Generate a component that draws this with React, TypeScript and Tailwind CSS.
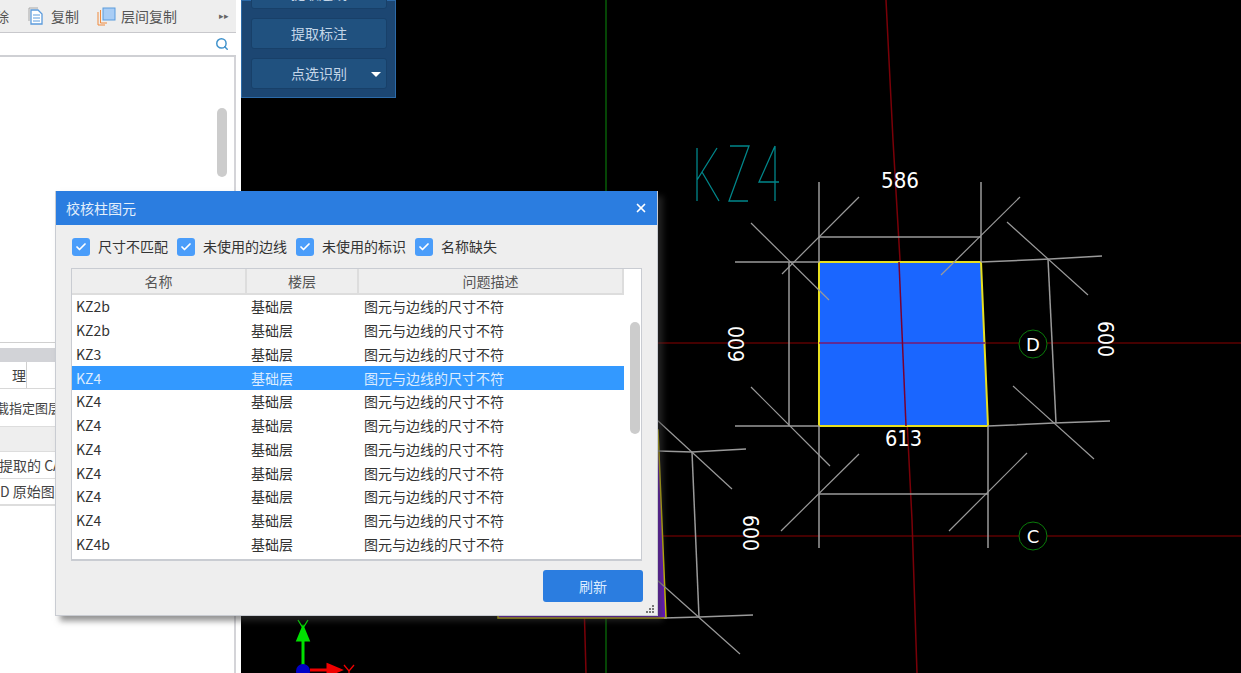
import { Search, Check, X } from 'lucide-react';

const cn = '"Noto Sans CJK SC", "Liberation Sans", sans-serif';

const rows = [
  'KZ2b', 'KZ2b', 'KZ3', 'KZ4', 'KZ4', 'KZ4', 'KZ4', 'KZ4', 'KZ4', 'KZ4', 'KZ4b',
];

const filters = ['尺寸不匹配', '未使用的边线', '未使用的标识', '名称缺失'];

function Line({ d, c = '#9a9a9a', w = 1.5 }: { d: string; c?: string; w?: number }) {
  return <path d={d} stroke={c} strokeWidth={w} fill="none" />;
}

function CadDrawing() {
  return (
    <svg className="absolute inset-0" width="1000" height="673" viewBox="241 0 1000 673">
      {/* axis lines */}
      <Line d="M606 0V673" c="#0a8a0a" w={1} />
      <Line d="M241 343H1241" c="#8a0000" w={1} />
      <Line d="M241 536H1241" c="#8a0000" w={1} />
      <Line d="M886 0L893 140L900 260L906 400L912 520L917 673" c="#7a0008" />
      <Line d="M584 600L586 673" c="#7a0008" />

      {/* purple column, mostly under the dialog */}
      <path d="M498 618H666L658 430H498Z" fill="#6a0fd0" stroke="#d4c400" strokeWidth="1.5" />

      {/* blue column */}
      <path d="M819 262H981L988 426H819Z" fill="#1a66ff" stroke="#e8e020" strokeWidth="2" />
      <Line d="M819 343H985" c="#7a1a70" />
      <Line d="M899 262L906 426" c="#7a0030" />

      {/* rebar grid */}
      <Line d="M735 262H819M981 262L1050 259L1102 256" />
      <Line d="M735 426H819M988 426L1054 423L1110 421" />
      <Line d="M819 182V262M981 182V262" />
      <Line d="M819 426V548M988 426V548" />
      <Line d="M819 237H981" />
      <Line d="M819 494H988" />
      <Line d="M789 262V426" />
      <Line d="M1048 259L1056 423" />
      <Line d="M751 223L829 300" w={1.2} />
      <Line d="M782 274L859 197" w={1.2} />
      <Line d="M941 275L1020 197" w={1.2} />
      <Line d="M1007 222L1088 295" w={1.2} />
      <Line d="M751 387L830 466" w={1.2} />
      <Line d="M781 531L859 454" w={1.2} />
      <Line d="M949 531L1027 453" w={1.2} />
      <Line d="M1013 386L1094 459" w={1.2} />

      {/* lower left column */}
      <Line d="M658 451L692 452L746 449" />
      <Line d="M692 452L699 617" />
      <Line d="M664 618L699 617L753 615" />
      <Line d="M657 420L732 489" w={1.2} />
      <Line d="M657 580L740 654" w={1.2} />

      {/* name label */}
      <g fill="none" stroke="#00868a" strokeWidth="1.3">
        <path d="M697 148V201M697 180L717 148M702 172L719 201" />
        <path d="M730 146H749L729 201H748" />
        <path d="M775 146L759 182H779M775 146V201" />
      </g>

      {/* dimensions */}
      <g fill="#ffffff" fontFamily='"DejaVu Sans", sans-serif' fontSize="21">
        <text x="881" y="188" textLength="38" lengthAdjust="spacingAndGlyphs">586</text>
        <text x="885" y="446" textLength="37" lengthAdjust="spacingAndGlyphs">613</text>
        <text transform="translate(744 362) rotate(-90)" textLength="36" lengthAdjust="spacingAndGlyphs">600</text>
        <text transform="translate(1098 321) rotate(90)" textLength="36" lengthAdjust="spacingAndGlyphs">600</text>
        <text transform="translate(743 515) rotate(90)" textLength="36" lengthAdjust="spacingAndGlyphs">600</text>
      </g>

      {/* axis bubbles */}
      <circle cx="1033" cy="344" r="14" fill="#000" stroke="#0a7a0a" strokeWidth="1" />
      <circle cx="1033" cy="536" r="14" fill="#000" stroke="#0a7a0a" strokeWidth="1" />
      <g fill="#ffffff" fontFamily='"DejaVu Sans", sans-serif' fontSize="18" textAnchor="middle">
        <text x="1033" y="351">D</text>
        <text x="1033" y="543">C</text>
      </g>

      {/* ucs marker */}
      <path d="M303 666V640M298 640L303 628L308 640Z" stroke="#00e000" strokeWidth="3" fill="#00e000" />
      <path d="M310 670H330M328 665L340 670L328 675Z" stroke="#f00000" strokeWidth="3" fill="#f00000" />
      <circle cx="303" cy="671" r="7" fill="#0000c8" />
      <path d="M298 620L303 628L308 620M303 628V635" stroke="#00e000" strokeWidth="1.3" fill="none" />
      <path d="M344 665L349 671L354 665M349 671V673" stroke="#f00000" strokeWidth="1.3" fill="none" />
    </svg>
  );
}

function DocIcon() {
  return (
    <svg width="17" height="18" viewBox="0 0 17 18" fill="none">
      <path d="M1 14V1H10" stroke="#a8a8a8" strokeWidth="1" />
      <path d="M3 3H10L14 7V17H3Z" fill="#fff" stroke="#5b9bdc" strokeWidth="1.3" />
      <path d="M5 8H12M5 11H12M5 14H12" stroke="#5b9bdc" strokeWidth="1" />
    </svg>
  );
}

function FloorCopyIcon() {
  return (
    <svg width="19" height="19" viewBox="0 0 19 19" fill="none">
      <path d="M1 18V5M1 18H8" stroke="#f08a3c" strokeWidth="1" />
      <path d="M3.5 16V3M3.5 16H10" stroke="#f08a3c" strokeWidth="1" />
      <rect x="6" y="1" width="12" height="12" fill="#a9cdf5" stroke="#5b9bdc" />
    </svg>
  );
}

function LeftPanel() {
  return (
    <div className="flex h-full w-[241px] shrink-0 flex-col bg-white" style={{ fontFamily: cn }}>
      <div className="flex h-[33px] items-center bg-[#eeeeee] border-b border-[#c8c8cc] text-[14px] text-[#555555] w-[236px] overflow-hidden">
        <span className="w-[9px] overflow-hidden flex justify-end shrink-0"><span className="shrink-0">除</span></span>
        <span className="ml-[19px]"><DocIcon /></span>
        <span className="ml-[6px]">复制</span>
        <span className="ml-[18px]"><FloorCopyIcon /></span>
        <span className="ml-[5px]">层间复制</span>
        <span className="ml-[42px] text-[9px] text-[#666666]">▸▸</span>
      </div>
      <div className="flex h-[24px] w-[236px] items-center justify-end border-b-2 border-[#cfd0d4] pr-[7px]">
        <Search size={14} strokeWidth={2.5} className="text-[#3f92cc]" />
      </div>
      <div className="flex w-[236px] flex-1 flex-col border-r-2 border-[#d4d4d8]">
        <div className="relative h-[285px]">
          <div className="absolute right-[7px] top-[51px] h-[69px] w-[10px] rounded-full bg-[#cccccc]" />
        </div>
        <div className="h-[6px] border-t border-[#d0d0d0]" />
        <div className="h-[14px] bg-[#d2d3d7]" />
        <div className="flex h-[27px] border-b border-[#d8d8d8]">
          <div className="flex w-[27px] items-center border-r border-[#d0d0d0] text-[14px] text-[#444444]">
            <span className="w-full overflow-hidden text-right">理</span>
          </div>
        </div>
        <div className="flex h-[37px] items-center overflow-hidden whitespace-nowrap text-[13px] text-[#444444]">
          <span className="-ml-[4px]">载指定图层</span>
        </div>
        <div className="h-[26px] border-y border-[#dddddd] bg-[#eeeeee]" />
        <div className="flex h-[27px] items-center overflow-hidden whitespace-nowrap border-b border-[#dddddd] text-[14px] text-[#444444]">
          <span className="-ml-[1px]">提取的 CAD</span>
        </div>
        <div className="flex h-[27px] items-center overflow-hidden whitespace-nowrap border-b-2 border-[#dddddd] text-[14px] text-[#444444]">
          <span>D 原始图层</span>
        </div>
      </div>
    </div>
  );
}

function FloatPanel() {
  const btn =
    'flex h-[31px] items-center justify-center rounded-[3px] border border-[#184069] bg-[#20517f] text-[14px] text-[#c4d6e8]';
  return (
    <div
      className="absolute left-[241px] top-0 flex h-[98px] w-[155px] flex-col gap-[9px] border border-[#2c6aa8] bg-[#1c4672] pl-[9px] pr-[8px]"
      style={{ fontFamily: cn }}
    >
      <div className="-mt-[23px] flex flex-col gap-[9px]">
        <div className={btn}>提取边线</div>
        <div className={btn}>提取标注</div>
        <div className={`${btn} relative`}>
          点选识别
          <span className="absolute right-[5px] top-[13px] h-0 w-0 border-x-[5px] border-t-[5px] border-x-transparent border-t-white" />
        </div>
      </div>
    </div>
  );
}

function Dialog() {
  return (
    <div
      className="absolute left-[55px] top-[191px] flex h-[425px] w-[603px] flex-col border border-[#c9ccd2] border-t-0 bg-[#eeeeee] shadow-[5px_5px_6px_rgba(60,60,60,0.55)]"
      style={{ fontFamily: cn }}
    >
      <div className="flex h-[34px] shrink-0 items-center justify-between bg-[#2b7de0] pl-[10px] pr-[9px] text-[14px] text-[#e4effb]">
        <span>校核柱图元</span>
        <X size={14} strokeWidth={3} className="text-white" />
      </div>

      <div className="flex h-[43px] shrink-0 items-center pl-[16px] text-[14px] text-[#333333]">
        {filters.map((f) => (
          <div key={f} className="mr-[9px] flex items-center gap-[8px]">
            <span className="flex h-[18px] w-[18px] items-center justify-center rounded-[3px] bg-[#4a9dfa]">
              <Check size={12} strokeWidth={3.5} className="text-white" />
            </span>
            <span>{f}</span>
          </div>
        ))}
      </div>

      <div className="relative mx-[15px] h-[293px] border-2 border-[#c9ccd2] border-l border-t border-r bg-white">
        <div className="flex h-[26px] w-[552px] border-b-2 border-[#dddddd] bg-[#eeeeee] text-[14px] text-[#555555]">
          <div className="flex w-[175px] items-center justify-center border-r-2 border-[#dddddd]">名称</div>
          <div className="flex w-[112px] items-center justify-center border-r-2 border-[#dddddd]">楼层</div>
          <div className="flex flex-1 items-center justify-center border-r-2 border-[#dddddd]">问题描述</div>
        </div>
        <div className="w-[552px]">
          {rows.map((r, i) => (
            <div
              key={i}
              className={`flex h-[23.75px] items-center text-[14px] ${
                i === 3 ? 'bg-[#3399ff] text-[#dcecff]' : 'text-[#333333]'
              }`}
            >
              <span className="w-[179px] pl-[4px]">{r}</span>
              <span className="w-[113px]">基础层</span>
              <span>图元与边线的尺寸不符</span>
            </div>
          ))}
        </div>
        <div className="absolute left-[558px] top-[53px] h-[112px] w-[10px] rounded-full bg-[#cccccc]" />
      </div>

      <div className="relative flex flex-1 items-start justify-end pr-[14px] pt-[9px]">
        <div className="flex h-[32px] w-[100px] items-center justify-center rounded-[3px] bg-[#2b7de0] text-[14px] text-[#dcecff]">
          刷新
        </div>
        <div className="absolute bottom-[2px] right-[3px] grid grid-cols-3 gap-[1px]">
          <span />
          <span />
          <span className="h-[2px] w-[2px] bg-[#777777]" />
          <span />
          <span className="h-[2px] w-[2px] bg-[#777777]" />
          <span className="h-[2px] w-[2px] bg-[#777777]" />
          <span className="h-[2px] w-[2px] bg-[#777777]" />
          <span className="h-[2px] w-[2px] bg-[#777777]" />
          <span className="h-[2px] w-[2px] bg-[#777777]" />
        </div>
      </div>
    </div>
  );
}

export default function App() {
  return (
    <div className="relative flex h-[673px] w-[1241px] overflow-hidden bg-white">
      <LeftPanel />
      <div className="relative flex-1 bg-black">
        <CadDrawing />
      </div>
      <FloatPanel />
      <Dialog />
    </div>
  );
}
